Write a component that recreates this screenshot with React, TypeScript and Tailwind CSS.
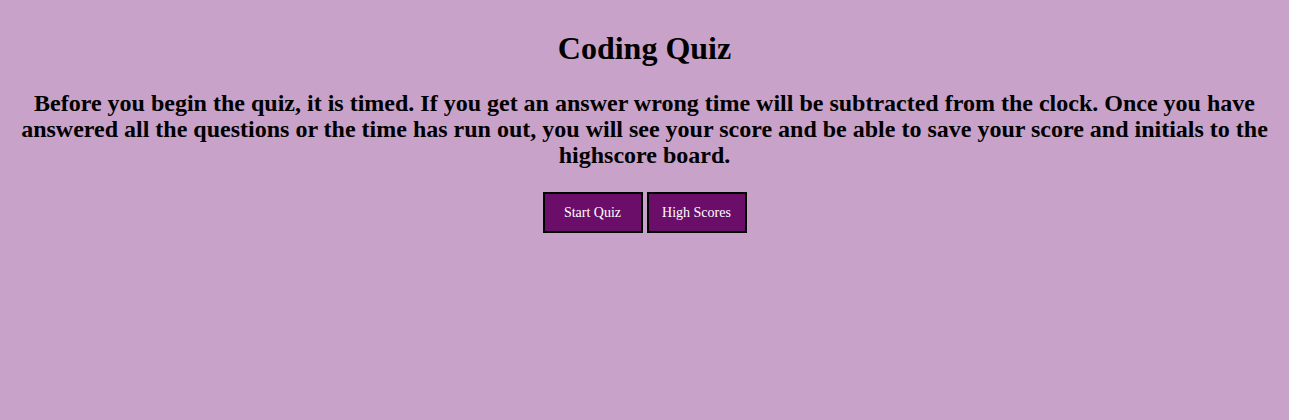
export default function App() {
  return (
    <div className="min-h-[420px] bg-[#c8a2c8] p-2 text-center text-black" style={{ fontFamily: '"Liberation Serif", serif' }}>
      <h1 className="mt-[22px] mb-[21px] text-[32px] leading-[37px] font-bold">Coding Quiz</h1>
      <h2 className="mt-[23px] mb-[24px] text-[24px] leading-[26px] font-bold">
        Before you begin the quiz, it is timed. If you get an answer wrong time will be subtracted from the clock. Once you have answered all the questions or the time has run out, you will see your score and be able to save your score and initials to the highscore board.
      </h2>
      <div className="flex justify-center gap-1">
        <button className="w-[100px] h-[41px] border-2 border-black bg-[#6a0e6a] text-[14px] text-white">Start Quiz</button>
        <button className="w-[100px] h-[41px] border-2 border-black bg-[#6a0e6a] text-[14px] text-white">High Scores</button>
      </div>
    </div>
  );
}
